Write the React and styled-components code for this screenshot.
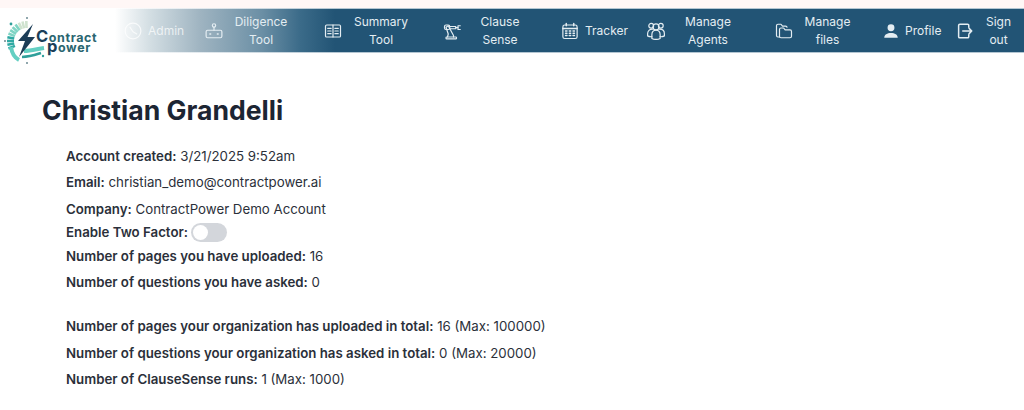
import React from "react";
import styled, { createGlobalStyle } from "styled-components";

const GlobalStyle = createGlobalStyle`
    html, body {
        margin: 0;
        padding: 0;
        background-color: white;
        font-family: "Inter", "Liberation Sans", sans-serif;
    }
`;

const Page = styled.div`
    width: 1024px;
    height: 410px;
    overflow: hidden;
    background-color: white;
`;

const TopStrip = styled.div`
    height: 8px;
    background-color: #fff7f6;
`;

const NavBar = styled.nav`
    display: flex;
    align-items: center;
    box-sizing: border-box;
    height: 45px;
    padding-left: 4px;
    border-top: 1px solid;
    border-bottom: 1px solid;
    border-image: linear-gradient(90deg, #fff 115px, #b4c6d2 340px) 1;
    background: linear-gradient(
        90deg,
        #fff 115px,
        #d3dee3 150px,
        #9fb4c1 200px,
        #6b8fa5 262px,
        #3b6b89 300px,
        #225475 335px
    );
`;

const Logo = styled.div`
    display: flex;
    align-items: center;
    width: 120px;
    height: 50px;
    margin-top: 21px;
    flex-shrink: 0;
`;

const LogoText = styled.div`
    display: flex;
    flex-direction: column;
    font-weight: 700;
    font-size: 12.5px;
    letter-spacing: 0.6px;
    color: #2a6670;
`;

const LogoLine = styled.span`
    display: block;
    height: 10px;
    line-height: 10px;
    margin-left: ${(props) => props.$indent || 0}px;
`;

const LogoCap = styled.span`
    font-size: 16.5px;
    color: #1b3f5a;
`;

const NavItem = styled.div`
    display: flex;
    align-items: center;
    width: ${(props) => props.$width}px;
    flex-shrink: 0;
    color: ${(props) => props.$color || "#e4edf2"};
`;

const NavIcon = styled.svg`
    width: 18px;
    height: 18px;
    flex-shrink: 0;
    fill: none;
    stroke: currentColor;
    stroke-width: 1.6;
    stroke-linecap: round;
    stroke-linejoin: round;
`;

const NavLabel = styled.span`
    width: ${(props) => props.$width}px;
    margin-left: ${(props) => props.$gap || 0}px;
    font-size: 12px;
    line-height: 18px;
    text-align: center;
`;

const Content = styled.main`
    padding: 0 0 0 42px;
`;

const Name = styled.h1`
    margin: 0;
    padding-top: 42px;
    font-size: 26.6px;
    line-height: 30px;
    font-weight: 700;
    color: #1c2533;
`;

const Details = styled.div`
    padding: 22px 0 0 24px;
`;

const Row = styled.p`
    display: flex;
    align-items: center;
    gap: ${(props) => props.$gap ?? 0}px;
    height: 19px;
    margin: 0 0 ${(props) => props.$after ?? 7}px;
    font-size: 13.27px;
    line-height: 19px;
    color: #2b303a;
    white-space: pre;
`;

const Strong = styled.strong`
    font-weight: 600;
`;

const Toggle = styled.span`
    display: inline-flex;
    align-items: center;
    box-sizing: border-box;
    width: 36px;
    height: 19px;
    padding: 2px;
    border-radius: 10px;
    background-color: #d3d6db;
`;

const ToggleKnob = styled.span`
    width: 15px;
    height: 15px;
    border-radius: 50%;
    background-color: white;
`;

function LogoMark() {
    const cx = 23;
    const cy = 25;
    const fan = [];
    for (let a = 92; a <= 212; a += 11) {
        const r = (a * Math.PI) / 180;
        fan.push(
            <line
                key={a}
                x1={cx + 13 * Math.cos(r)}
                y1={cy - 13 * Math.sin(r)}
                x2={cx + 20 * Math.cos(r)}
                y2={cy - 20 * Math.sin(r)}
                stroke={a < 125 ? "#cfe3cf" : a < 165 ? "#7fd4c4" : "#2fa9a3"}
                strokeWidth="2.6"
            />
        );
    }
    return (
        <svg width="32" height="50" viewBox="0 0 32 50" style={{ overflow: "visible" }}>
            {fan}
            <path d="M7 31 C8 38 11 42 15 44" stroke="#63cfc2" strokeWidth="4" fill="none" />
            <path d="M20 35 C27 35 33 33 40 32" stroke="#63cfc2" strokeWidth="4" fill="none" />
            <path d="M18 41 C26 41 31 39 37 37" stroke="#2f9f9a" strokeWidth="2.6" fill="none" />
            <path d="M29 8 L14 25 L21 25 L15 41 L31 21 L23.5 21 Z" fill="#1c3d57" />
            <circle cx="23" cy="2" r="1" fill="#6b8a92" />
            <circle cx="1" cy="25" r="1" fill="#6b8a92" />
            <circle cx="23" cy="47" r="1" fill="#6b8a92" />
            <circle cx="7" cy="8" r="1.4" fill="#2f9f9a" />
            <circle cx="39" cy="40" r="1.2" fill="#2f9f9a" />
        </svg>
    );
}

const icons = {
    admin: (
        <>
            <circle cx="12" cy="12" r="10.5" />
            <path d="M8 7 L12 13 L17 16" />
        </>
    ),
    robot: (
        <>
            <circle cx="12" cy="4.5" r="2.2" />
            <path d="M12 7 V11" />
            <rect x="1.5" y="11" width="21" height="10" rx="2" />
            <path d="M6.5 16 H7.5 M16.5 16 H17.5" strokeWidth="2" />
        </>
    ),
    book: (
        <>
            <rect x="2" y="4" width="20" height="16" rx="1.5" />
            <path d="M12 4 V20 M5 8.5 H9.5 M5 12 H9.5 M5 15.5 H9.5 M14.5 8.5 H19 M14.5 12 H19 M14.5 15.5 H19" />
        </>
    ),
    arm: (
        <>
            <rect x="4" y="20" width="14" height="2.5" rx="1" />
            <path d="M6 20 L7 16 L4 7 L7 5 L14 18 V20" />
            <rect x="2" y="4" width="7" height="6" rx="2" />
            <path d="M9 6 H17 V9 H9" />
            <path d="M23 5 H20 V10 H23" />
            <path d="M17 7.5 H20" />
        </>
    ),
    calendar: (
        <>
            <rect x="2.5" y="4" width="19" height="18" rx="2.5" />
            <path d="M2.5 8.5 H21.5 M7 2 V5 M17 2 V5" strokeWidth="2" />
            <path d="M6 12 H8 M11 12 H13 M16 12 H18 M6 15 H8 M11 15 H13 M16 15 H18 M6 18 H8 M11 18 H13 M16 18 H18" strokeWidth="1.8" />
        </>
    ),
    people: (
        <>
            <circle cx="12" cy="6.5" r="4" />
            <circle cx="5.6" cy="5" r="3.2" />
            <circle cx="18.4" cy="5" r="3.2" />
            <path d="M6.5 22 V17 C6.5 13 9 11 12 11 C15 11 17.5 13 17.5 17 V22 C14 23.6 10 23.6 6.5 22 Z" />
            <path d="M7.3 9.5 C3.5 9.5 0.8 12 0.8 15.5 V18.5 C2.6 19.6 4.6 19.8 6.5 19.6" />
            <path d="M16.7 9.5 C20.5 9.5 23.2 12 23.2 15.5 V18.5 C21.4 19.6 19.4 19.8 17.5 19.6" />
        </>
    ),
    folders: (
        <>
            <path d="M6 20 H4 C2.8 20 2 19 2 18 V5 C2 3.8 2.8 3 4 3 H8 L10 5.5 H14 C15.2 5.5 16 6 16 7" />
            <path d="M6 10 C6 8.8 6.8 8 8 8 H11.5 L13.5 10.5 H20 C21.2 10.5 22 11.3 22 12.5 V19 C22 20.2 21.2 21 20 21 H8 C6.8 21 6 20.2 6 19 Z" />
        </>
    ),
    person: (
        <path
            d="M12 3 a4.6 4.6 0 1 1 0 9.2 a4.6 4.6 0 1 1 0 -9.2 Z M3 21 C3 16.5 7 14.5 12 14.5 C17 14.5 21 16.5 21 21 Z"
            fill="currentColor"
            stroke="none"
        />
    ),
    signout: (
        <>
            <path d="M17 7 V4.5 C17 3.7 16.3 3 15.5 3 H5 C4.2 3 3.5 3.7 3.5 4.5 V19.5 C3.5 20.3 4.2 21 5 21 H15.5 C16.3 21 17 20.3 17 19.5 V17" strokeWidth="2" />
            <path d="M9 12 H21 M17.5 8.5 L21 12 L17.5 15.5" strokeWidth="2" />
        </>
    ),
};

function Item({ icon, width, gap, labelWidth, color, children }) {
    return (
        <NavItem $width={width} $color={color}>
            <NavIcon viewBox="0 0 24 24">{icons[icon]}</NavIcon>
            <NavLabel $width={labelWidth} $gap={gap}>{children}</NavLabel>
        </NavItem>
    );
}

export default function App() {
    return (
        <Page>
            <GlobalStyle />
            <TopStrip />
            <NavBar>
                <Logo>
                    <LogoMark />
                    <LogoText>
                        <LogoLine><LogoCap>C</LogoCap>ontract</LogoLine>
                        <LogoLine $indent={11}><LogoCap>p</LogoCap>ower</LogoLine>
                    </LogoText>
                </Logo>
                <Item icon="admin" width={81} gap={6} labelWidth={36} color="rgba(255, 255, 255, 0.72)">Admin</Item>
                <Item icon="robot" width={119} gap={4} labelWidth={68}>Diligence<br />Tool</Item>
                <Item icon="book" width={119} gap={4} labelWidth={70}>Summary<br />Tool</Item>
                <Item icon="arm" width={118} gap={4} labelWidth={70}>Clause<br />Sense</Item>
                <Item icon="calendar" width={86} gap={6} labelWidth={42}>Tracker</Item>
                <Item icon="people" width={128} gap={4} labelWidth={78}>Manage<br />Agents</Item>
                <Item icon="folders" width={107} gap={4} labelWidth={61}>Manage<br />files</Item>
                <Item icon="person" width={74} gap={5} labelWidth={36}>Profile</Item>
                <Item icon="signout" width={68} gap={4} labelWidth={41}>Sign<br />out</Item>
            </NavBar>
            <Content>
                <Name>Christian Grandelli</Name>
                <Details>
                    <Row><span><Strong>Account created:</Strong> 3/21/2025 9:52am</span></Row>
                    <Row $after={8}><span><Strong>Email:</Strong> christian_demo@contractpower.ai</span></Row>
                    <Row $after={4}><span><Strong>Company:</Strong> ContractPower Demo Account</span></Row>
                    <Row $after={5} $gap={3}>
                        <Strong>Enable Two Factor:</Strong>
                        <Toggle><ToggleKnob /></Toggle>
                    </Row>
                    <Row><span><Strong>Number of pages you have uploaded:</Strong> 16</span></Row>
                    <Row $after={25}><span><Strong>Number of questions you have asked:</Strong> 0</span></Row>
                    <Row $after={8}><span><Strong>Number of pages your organization has uploaded in total:</Strong> 16 (Max: 100000)</span></Row>
                    <Row><span><Strong>Number of questions your organization has asked in total:</Strong> 0 (Max: 20000)</span></Row>
                    <Row><span><Strong>Number of ClauseSense runs:</Strong> 1 (Max: 1000)</span></Row>
                </Details>
            </Content>
        </Page>
    );
}
